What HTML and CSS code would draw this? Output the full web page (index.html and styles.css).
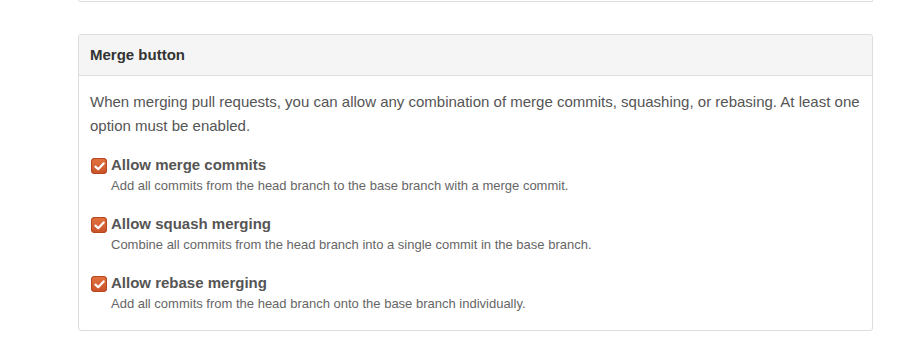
FILE: index.html
```html
<!DOCTYPE html>
<html lang="en">
<head>
    <meta charset="UTF-8">
    <link rel="stylesheet" href="styles.css">
</head>
<body>
    <div class="page">
        <div class="prev-box"></div>

        <div class="box">
            <div class="box-header">Merge button</div>
            <div class="box-body">
                <p class="intro">When merging pull requests, you can allow any combination of merge commits, squashing, or rebasing. At least one option must be enabled.</p>

                <div class="option">
                    <span class="check">
                        <svg width="11" height="9" viewBox="0 0 11 9"><path d="M1.5 4.6 L4.2 7.2 L9.6 1.4" fill="none" stroke="#fff" stroke-width="2.2" stroke-linecap="round" stroke-linejoin="round"/></svg>
                    </span>
                    <div class="option-text">
                        <div class="option-title">Allow merge commits</div>
                        <div class="option-note">Add all commits from the head branch to the base branch with a merge commit.</div>
                    </div>
                </div>

                <div class="option">
                    <span class="check">
                        <svg width="11" height="9" viewBox="0 0 11 9"><path d="M1.5 4.6 L4.2 7.2 L9.6 1.4" fill="none" stroke="#fff" stroke-width="2.2" stroke-linecap="round" stroke-linejoin="round"/></svg>
                    </span>
                    <div class="option-text">
                        <div class="option-title">Allow squash merging</div>
                        <div class="option-note">Combine all commits from the head branch into a single commit in the base branch.</div>
                    </div>
                </div>

                <div class="option">
                    <span class="check">
                        <svg width="11" height="9" viewBox="0 0 11 9"><path d="M1.5 4.6 L4.2 7.2 L9.6 1.4" fill="none" stroke="#fff" stroke-width="2.2" stroke-linecap="round" stroke-linejoin="round"/></svg>
                    </span>
                    <div class="option-text">
                        <div class="option-title">Allow rebase merging</div>
                        <div class="option-note">Add all commits from the head branch onto the base branch individually.</div>
                    </div>
                </div>
            </div>
        </div>
    </div>
</body>
</html>
```

FILE: styles.css
```css
body {
    margin: 0;
    background-color: #fff;
    font-family: "Liberation Sans", Arial, sans-serif;
    font-size: 15px;
    color: #333;
}

.page {
    width: 795px;
    margin-left: 78px;
}

.prev-box {
    height: 1px;
    border: 1px solid #ddd;
    border-top: none;
    border-radius: 0 0 3px 3px;
}

.box {
    margin-top: 32px;
    border: 1px solid #ddd;
    border-radius: 3px;
}

.box-header {
    height: 40px;
    line-height: 40px;
    padding: 0 11px;
    background-color: #f5f5f5;
    border-bottom: 1px solid #ddd;
    border-radius: 3px 3px 0 0;
    font-weight: bold;
    font-size: 15px;
    color: #333;
}

.box-body {
    padding: 14px 11px 16px;
}

.intro {
    margin: 0 0 16px;
    line-height: 24px;
    color: #555;
}

.option {
    display: flex;
    align-items: flex-start;
    gap: 4px;
    margin-bottom: 17px;
}

.option:last-child {
    margin-bottom: 0;
}

.check {
    flex: none;
    width: 16px;
    height: 16px;
    margin: 4px 0 0 1px;
    display: flex;
    align-items: center;
    justify-content: center;
    border-radius: 4px;
    background: linear-gradient(#e3733f, #c9522a);
    box-shadow: inset 0 0 0 1px #b5461f;
}

.option-title {
    font-weight: bold;
    font-size: 15px;
    line-height: 22px;
    color: #555;
}

.option-note {
    font-size: 13px;
    line-height: 20px;
    color: #666;
}
```
